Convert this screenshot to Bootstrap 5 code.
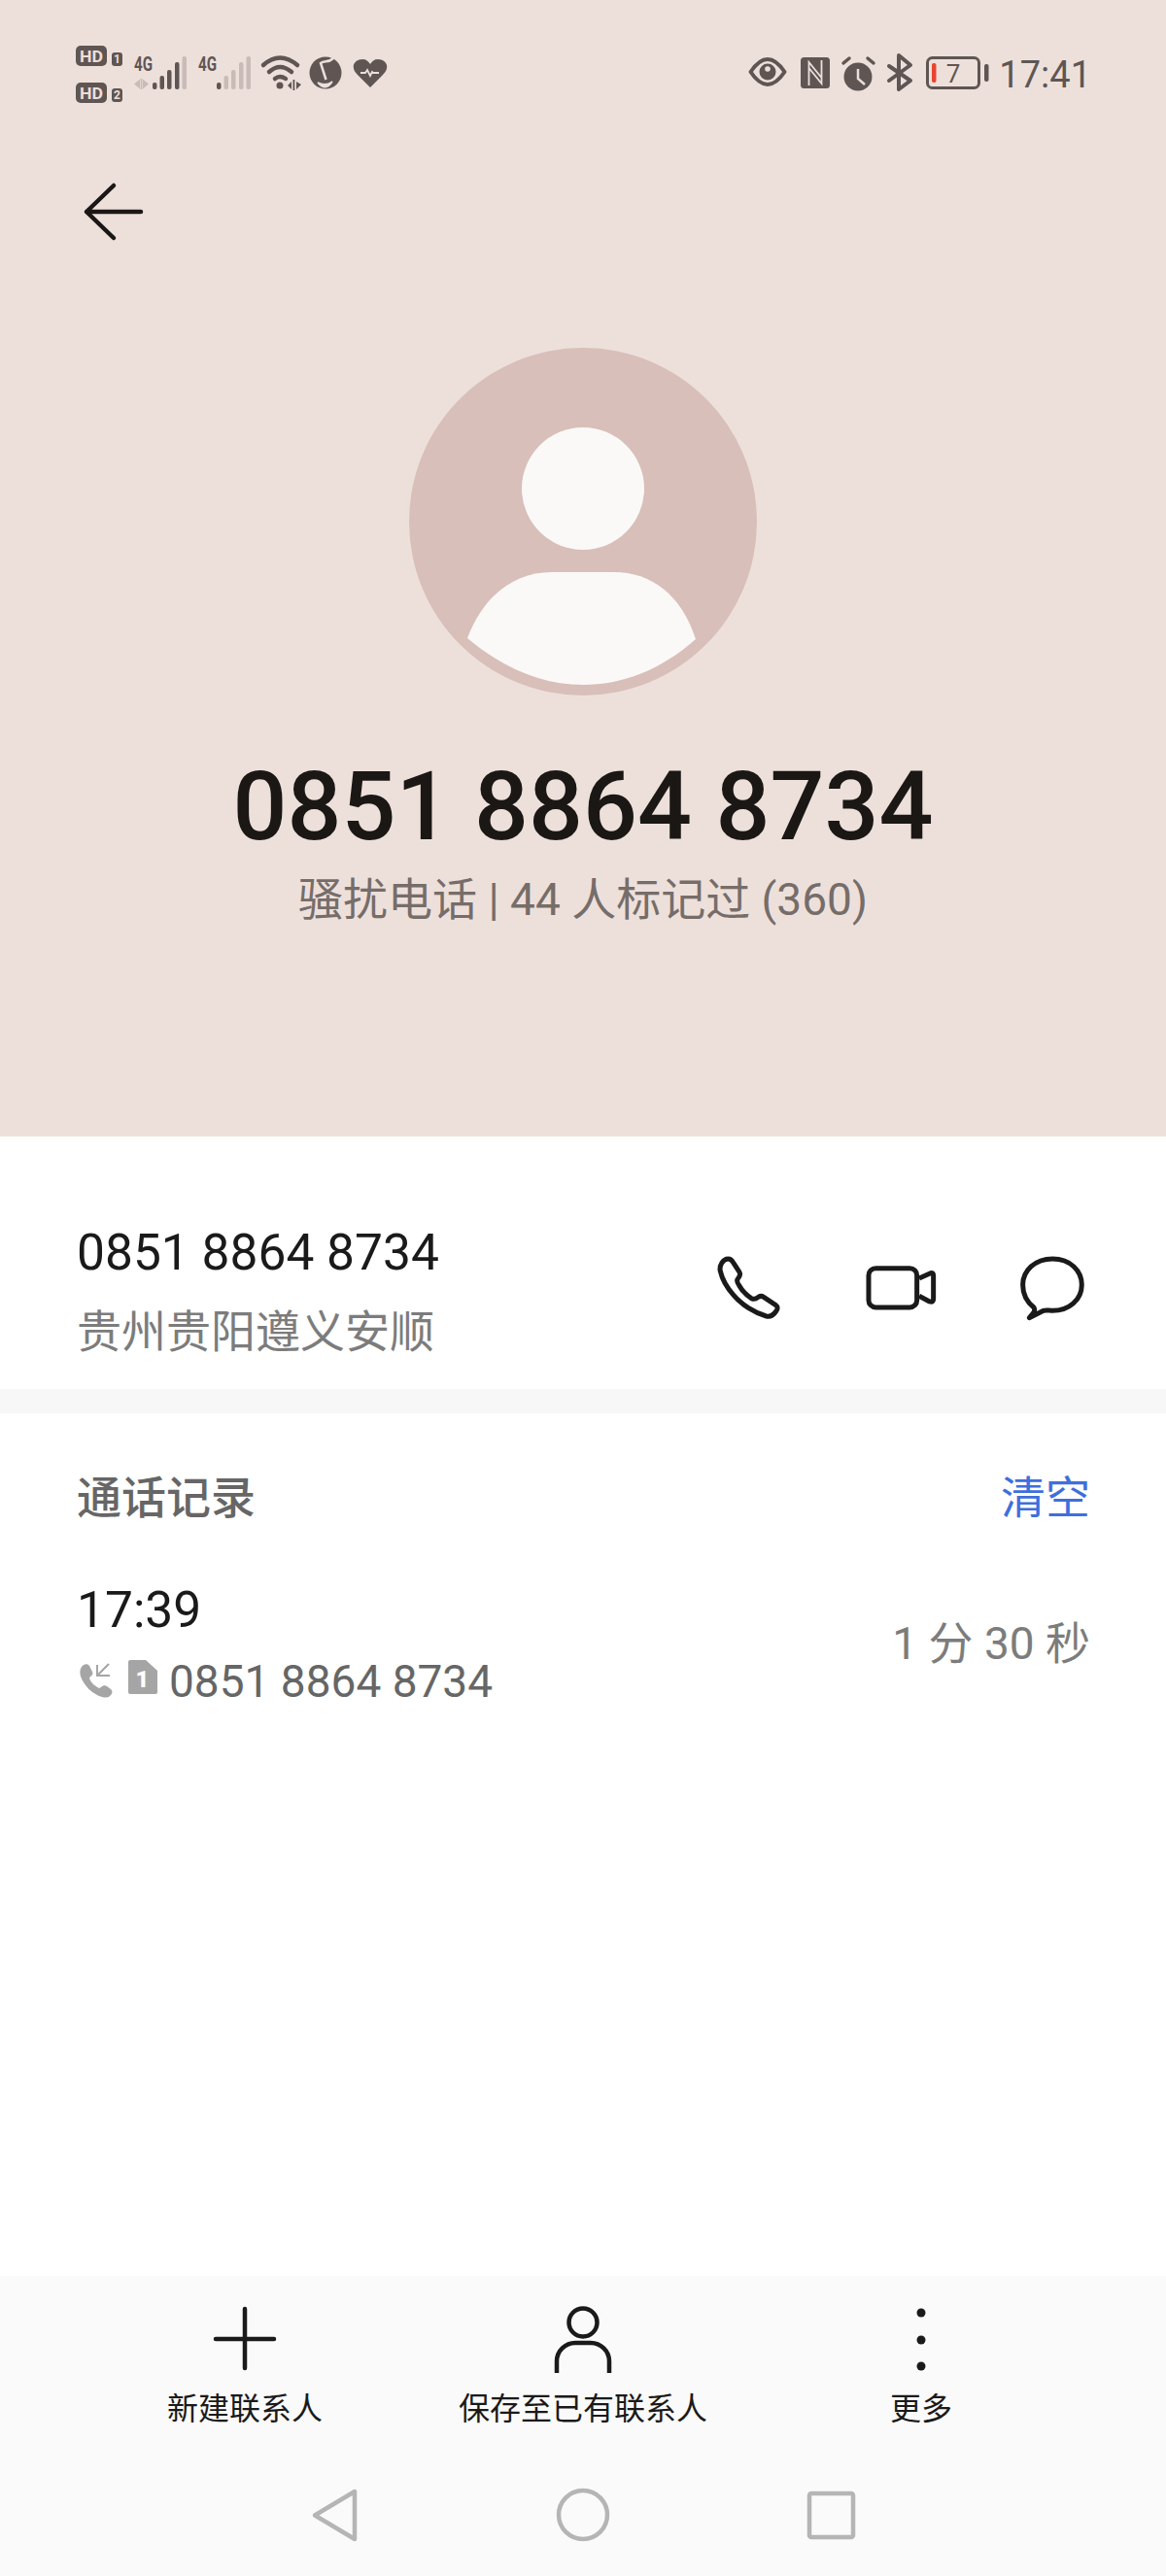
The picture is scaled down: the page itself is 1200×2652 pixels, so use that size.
<!doctype html>
<html lang="zh-CN">

<head>
    <meta charset="utf-8">
    <meta name="viewport" content="width=device-width, initial-scale=1">
    <title>通话详情</title>
    <link href="https://cdn.jsdelivr.net/npm/bootstrap@5.3.5/dist/css/bootstrap.min.css" rel="stylesheet">
    <style>
        body {
            background-color: #fff;
            font-family: Roboto, "Noto Sans CJK SC", sans-serif;
        }

        svg {
            display: block;
            flex-shrink: 0;
        }

        .app-shell {
            height: 2652px;
            overflow: hidden;
        }

        .call-hero {
            height: 1170px;
            background-color: #ede0db;
        }

        .status-row {
            padding: 45px 77px 0 78px;
            height: 105px;
            color: #5f5653;
        }

        .status-time {
            font-size: 38px;
            line-height: 60px;
            margin-left: 6px;
            padding-top: 2px;
        }

        .back-btn {
            margin: 75px 0 0 80px;
        }

        .avatar-pic {
            margin: 103px auto 0;
        }

        .hero-number {
            margin-top: 55px;
            font-size: 98.500px;
            line-height: 120px;
            font-weight: 500;
            color: #1a1715;
        }

        .hero-tag {
            margin-top: 5px;
            font-size: 46px;
            line-height: 60px;
            color: #766d69;
        }

        .number-row {
            height: 260px;
            padding: 90px 78px 0 79px;
        }

        .number-main {
            font-size: 51.500px;
            line-height: 60px;
            color: #1a1a1a;
        }

        .number-place {
            margin-top: 21px;
            font-size: 46px;
            line-height: 60px;
            color: #7c7c7c;
        }

        .row-actions {
            margin-top: 25px;
            margin-right: 1px;
        }

        .band-gap {
            height: 25px;
            background-color: #f7f7f7;
        }

        .log-wrap {
            padding: 57px 78px 0 79px;
        }

        .log-title {
            font-size: 46px;
            line-height: 60px;
            font-weight: 500;
            color: #666;
        }

        .log-clear {
            font-size: 46px;
            line-height: 60px;
            color: #3e6fdd;
        }

        .log-item {
            margin-top: 56px;
        }

        .log-time {
            font-size: 51.500px;
            line-height: 60px;
            color: #1a1a1a;
        }

        .log-sub {
            margin-top: 13px;
            font-size: 46px;
            line-height: 60px;
            color: #666;
        }

        .log-length {
            padding-bottom: 6px;
            font-size: 46px;
            line-height: 60px;
            color: #7c7c7c;
        }

        .tool-bar {
            height: 309px;
            background-color: #fafafa;
        }

        .tool-actions {
            padding-top: 30px;
        }

        .tool-cell {
            width: 348px;
            font-size: 32px;
            line-height: 44px;
            color: #1a1a1a;
        }

        .tool-cell svg {
            margin: 0 auto 11px;
        }

        .nav-keys {
            margin-top: 57px;
        }
    </style>
</head>

<body>
    <div class="app-shell d-flex flex-column">
        <section class="call-hero">
            <div class="status-row d-flex justify-content-between">
                <div class="d-flex">
                    <svg width="54" height="62" viewBox="78 45 54 62">
                        <rect x="78" y="47" width="32" height="21" rx="5" fill="#5f5653" />
                        <text x="94" y="64" text-anchor="middle" font-family="Roboto" font-weight="700" font-size="17" textLength="24" lengthAdjust="spacingAndGlyphs" fill="#ecdfdb">HD</text>
                        <rect x="115" y="54" width="11" height="14" rx="3" fill="#5f5653" />
                        <text x="120.500" y="65" text-anchor="middle" font-family="Roboto" font-weight="700" font-size="12" fill="#ecdfdb">1</text>
                        <rect x="78" y="85" width="32" height="21" rx="5" fill="#5f5653" />
                        <text x="94" y="102" text-anchor="middle" font-family="Roboto" font-weight="700" font-size="17" textLength="24" lengthAdjust="spacingAndGlyphs" fill="#ecdfdb">HD</text>
                        <rect x="115" y="91" width="11" height="14" rx="3" fill="#5f5653" />
                        <text x="120.500" y="102" text-anchor="middle" font-family="Roboto" font-weight="700" font-size="12" fill="#ecdfdb">2</text>
                    </svg>
                    <svg width="66" height="60" viewBox="132 45 66 60">
                        <text x="138" y="73" font-family="Liberation Sans Narrow, Roboto" font-weight="700" font-size="20" textLength="19" lengthAdjust="spacingAndGlyphs" fill="#5f5653">4G</text>
                        <path d="M138 86.500l6-5v10zM153 86.500l-6-5v10z" fill="#c9bcb8" />
                        <rect x="144.700" y="81" width="1.700" height="11" fill="#c9bcb8" />
                        <rect x="157" y="85" width="4.500" height="7" rx="2" fill="#5f5653" />
                        <rect x="164.500" y="78" width="4.500" height="14" rx="2" fill="#5f5653" />
                        <rect x="172" y="72" width="4.500" height="20" rx="2" fill="#5f5653" />
                        <rect x="180" y="64" width="4.500" height="28" rx="2" fill="#5f5653" />
                        <rect x="187.500" y="58" width="4.500" height="34" rx="2" fill="#c9bcb8" />
                    </svg>
                    <svg width="66" height="60" viewBox="198 45 66 60">
                        <text x="204" y="73" font-family="Liberation Sans Narrow, Roboto" font-weight="700" font-size="20" textLength="19" lengthAdjust="spacingAndGlyphs" fill="#5f5653">4G</text>
                        <rect x="223" y="85" width="4.500" height="7" rx="2" fill="#5f5653" />
                        <rect x="230.500" y="78" width="4.500" height="14" rx="2" fill="#c9bcb8" />
                        <rect x="238" y="72" width="4.500" height="20" rx="2" fill="#c9bcb8" />
                        <rect x="246" y="64" width="4.500" height="28" rx="2" fill="#c9bcb8" />
                        <rect x="253.500" y="58" width="4.500" height="34" rx="2" fill="#c9bcb8" />
                    </svg>
                    <svg width="50" height="60" viewBox="264 45 50 60">
                        <g fill="none" stroke="#5f5653" stroke-width="4.500" stroke-linecap="round">
                            <path d="M271 67q17-15 35 0" />
                            <path d="M277 74q11-10 23 0" />
                            <path d="M283 81q5-4 11 0" />
                        </g>
                        <circle cx="288" cy="88" r="3.500" fill="#5f5653" />
                        <path d="M296 88l4-4v8zM310 87l-5-3v8z" fill="#5f5653" />
                        <rect x="301.500" y="82" width="1.800" height="11" fill="#5f5653" />
                    </svg>
                    <svg width="44" height="60" viewBox="314 45 44 60">
                        <circle cx="335" cy="75" r="16.500" fill="#5f5653" />
                        <path d="M343 60C338 65 334 62 330 65L335.500 82" fill="none" stroke="#ecdfdb" stroke-width="2.500" />
                        <path d="M327 85Q335 95 342 84Q335 89 327 85Z" fill="#ecdfdb" stroke="#ecdfdb" stroke-width="1.500" />
                    </svg>
                    <svg width="44" height="60" viewBox="358 45 44 60">
                        <path d="M381 90l-13-13c-9-9-2-16 5-16 4 0 6 2 8 5 2-3 4-5 8-5 7 0 14 7 5 16z" fill="#5f5653" />
                        <path d="M371 75h5l2-3 3 6 2-4 1 1h6" fill="none" stroke="#ecdfdb" stroke-width="1.800" />
                    </svg>
                </div>
                <div class="d-flex">
                    <svg width="51" height="60" viewBox="765 45 51 60">
                        <path d="M772.500 74q17.500-26 35 0q-17.500 26-35 0z" fill="none" stroke="#5f5653" stroke-width="4" stroke-linejoin="round" />
                        <circle cx="790" cy="74" r="8.500" fill="#5f5653" />
                        <circle cx="790" cy="71" r="2.800" fill="#ecdfdb" />
                    </svg>
                    <svg width="44" height="60" viewBox="816 45 44 60">
                        <rect x="824" y="59" width="30" height="32" rx="3.500" fill="#5f5653" />
                        <path d="M832.500 88V64l13 16M832.500 70l13 16V62" fill="none" stroke="#ecdfdb" stroke-width="1.800" />
                    </svg>
                    <svg width="45" height="60" viewBox="860 45 45 60">
                        <circle cx="883" cy="79" r="14.500" fill="#5f5653" />
                        <path d="M883 71v10l7 6" fill="none" stroke="#ecdfdb" stroke-width="2.500" />
                        <path d="M868 65l6-5M899 65l-6-5" fill="none" stroke="#5f5653" stroke-width="3.500" stroke-linecap="round" />
                    </svg>
                    <svg width="40" height="60" viewBox="905 45 40 60">
                        <path d="M915 68l22 15-12 9V57l12 10-22 16" fill="none" stroke="#5f5653" stroke-width="4" stroke-linecap="round" stroke-linejoin="round" />
                    </svg>
                    <svg width="77" height="60" viewBox="945 45 77 60">
                        <rect x="954.500" y="59.500" width="53" height="31" rx="5" fill="none" stroke="#5f5653" stroke-width="3" />
                        <rect x="959" y="65" width="4.500" height="20" rx="2" fill="#e8452f" />
                        <text x="981" y="85" text-anchor="middle" font-family="Roboto" font-size="26" fill="#5f5653">7</text>
                        <rect x="1013" y="66" width="4.500" height="18" rx="2" fill="#5f5653" />
                    </svg>
                    <span class="status-time">17:41</span>
                </div>
            </div>

            <button class="back-btn btn p-0 border-0 d-block" type="button" aria-label="返回">
                <svg width="75" height="75" viewBox="80 180 75 75">
                    <path d="M117 191l-28 27 28 27M89 218h56" fill="none" stroke="#1a1715" stroke-width="4.500" stroke-linecap="round" stroke-linejoin="round" />
                </svg>
            </button>

            <svg class="avatar-pic" width="358" height="358" viewBox="421 358 358 358">
                <circle cx="600" cy="537" r="179" fill="#d8bfb9" />
                <circle cx="600" cy="503" r="63" fill="#fbf9f8" />
                <path d="M481 657C498 612 530 589 568 589H632C670 589 701 612 716 658C680 690 640 705 600 705C558 705 518 688 481 657Z" fill="#fbf9f8" />
            </svg>

            <div class="hero-number text-center">0851 8864 8734</div>
            <div class="hero-tag text-center">骚扰电话 | 44 人标记过 (360)</div>
        </section>

        <section class="number-row d-flex justify-content-between">
            <div>
                <div class="number-main">0851 8864 8734</div>
                <div class="number-place">贵州贵阳遵义安顺</div>
            </div>
            <div class="row-actions d-flex">
                <svg width="155" height="80" viewBox="730 1285 155 80">
                    <path transform="translate(700 1240) scale(.3333)" d="M148 168C156 168 160 172 164 180L183 209C187 216 184 222 179 228C174 234 176 242 182 250C192 268 204 280 220 290C228 294 234 292 240 287C246 282 252 282 258 286L294 310C302 316 302 322 296 330C288 342 278 348 266 345C230 335 190 310 165 280C145 258 130 232 124 206C120 190 132 168 148 168Z" fill="none" stroke="#1a1a1a" stroke-width="15" stroke-linejoin="round" />
                </svg>
                <svg width="155" height="80" viewBox="885 1285 155 80">
                    <g transform="translate(700 1240) scale(.3333)" fill="none" stroke="#1a1a1a" stroke-width="15" stroke-linejoin="round">
                        <rect x="582" y="197" width="149" height="121" rx="22" />
                        <path d="M738 228L773 212Q782 210 782 220V292Q782 304 770 300L738 283" />
                    </g>
                </svg>
                <svg width="81" height="80" viewBox="1040 1285 81 80">
                    <path transform="translate(700 1240) scale(.3333)" d="M1150 168C1205 168 1240 205 1240 248C1240 295 1200 328 1150 328C1140 328 1130 325 1122 328L1078 350C1092 335 1098 328 1092 318C1070 300 1058 280 1058 248C1058 205 1095 168 1150 168Z" fill="none" stroke="#1a1a1a" stroke-width="15" stroke-linejoin="round" />
                </svg>
            </div>
        </section>

        <div class="band-gap"></div>

        <section class="log-wrap">
            <div class="d-flex justify-content-between">
                <span class="log-title">通话记录</span>
                <a class="log-clear text-decoration-none" href="#">清空</a>
            </div>
            <div class="log-item d-flex justify-content-between align-items-center">
                <div>
                    <div class="log-time">17:39</div>
                    <div class="log-sub d-flex align-items-center">
                        <svg width="53" height="60" viewBox="79 1701 53 60">
                            <path d="M84 1716c2-3 6-4 8-1l3 6c1 2 0 4-2 5l-1 2c2 5 6 8 10 10l2-1c2-2 4-2 6-1l4 3c2 2 2 4 0 6c-2 3-6 3-9 2c-10-3-18-11-22-21c-1-4-1-7 1-10z" fill="#a5a5a5" />
                            <path d="M112 1713l-12 12M100 1714v11h13" fill="none" stroke="#a5a5a5" stroke-width="2" />
                        </svg>
                        <svg width="42" height="60" viewBox="132 1701 42 60">
                            <path d="M134 1709h16l12 11v22a2 2 0 0 1-2 2h-26a2 2 0 0 1-2-2v-31a2 2 0 0 1 2-2z" fill="#a5a5a5" />
                            <text x="146.500" y="1737" text-anchor="middle" font-family="Roboto" font-weight="900" font-size="24" fill="#fff">1</text>
                        </svg>
                        <span>0851 8864 8734</span>
                    </div>
                </div>
                <span class="log-length">1 分 30 秒</span>
            </div>
        </section>

        <footer class="tool-bar mt-auto">
            <div class="tool-actions d-flex justify-content-center text-center">
                <div class="tool-cell">
                    <svg width="70" height="74" viewBox="217 2373 70 74">
                        <path d="M252 2377v61M222 2408h60" fill="none" stroke="#1a1a1a" stroke-width="4.500" stroke-linecap="round" />
                    </svg>
                    新建联系人
                </div>
                <div class="tool-cell">
                    <svg width="70" height="74" viewBox="565 2373 70 74">
                        <circle cx="600" cy="2391" r="14.500" fill="none" stroke="#1a1a1a" stroke-width="4.500" />
                        <path d="M573 2443v-12c0-11 9-19 19-19h16c10 0 19 8 19 19v12" fill="none" stroke="#1a1a1a" stroke-width="4.500" />
                    </svg>
                    保存至已有联系人
                </div>
                <div class="tool-cell">
                    <svg width="70" height="74" viewBox="913 2373 70 74">
                        <circle cx="948" cy="2381" r="4.500" fill="#1a1a1a" />
                        <circle cx="948" cy="2409" r="4.500" fill="#1a1a1a" />
                        <circle cx="948" cy="2436" r="4.500" fill="#1a1a1a" />
                    </svg>
                    更多
                </div>
            </div>
            <div class="nav-keys d-flex justify-content-center">
                <svg width="255" height="60" viewBox="300 2559 255 60">
                    <path d="M365 2565v49l-41-24.500z" fill="none" stroke="#b5b5b5" stroke-width="4.500" stroke-linejoin="round" />
                </svg>
                <svg width="90" height="60" viewBox="555 2559 90 60">
                    <circle cx="600" cy="2589" r="25" fill="none" stroke="#b5b5b5" stroke-width="4.500" />
                </svg>
                <svg width="255" height="60" viewBox="645 2559 255 60">
                    <rect x="833" y="2567" width="45" height="45" rx="2" fill="none" stroke="#b5b5b5" stroke-width="4.500" />
                </svg>
            </div>
        </footer>
    </div>

    <script src="https://cdn.jsdelivr.net/npm/bootstrap@5.3.5/dist/js/bootstrap.bundle.min.js"></script>
</body>

</html>
